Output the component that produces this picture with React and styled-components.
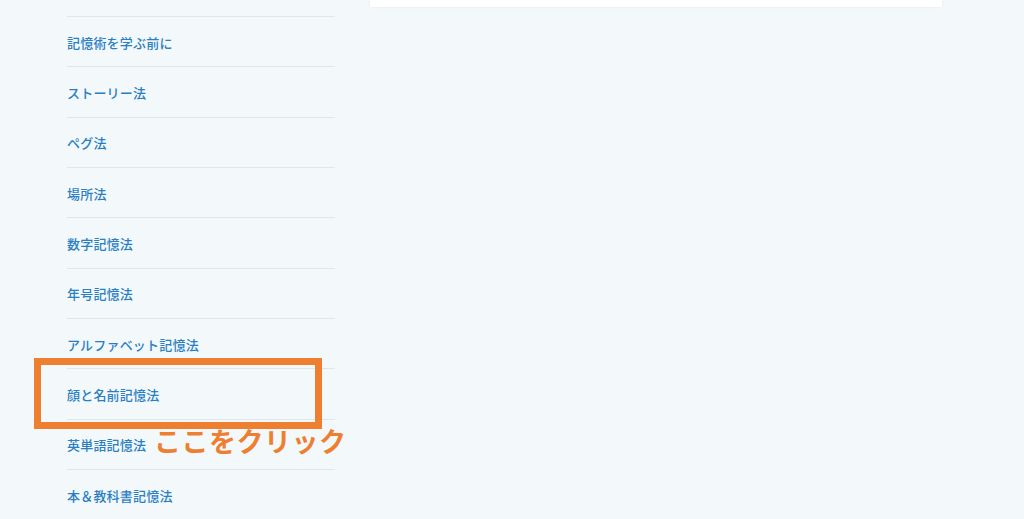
import React from "react";
import styled, { createGlobalStyle } from "styled-components";

const GlobalStyle = createGlobalStyle`
  html, body {
    margin: 0;
    padding: 0;
    background: #f3f8fb;
  }
  body {
    font-family: "Noto Sans CJK JP", "Noto Sans", sans-serif;
    overflow: hidden;
  }
`;

const Page = styled.div`
  position: relative;
  width: 1024px;
  height: 519px;
  display: flex;
  gap: 35px;
  padding-left: 67px;
  box-sizing: border-box;
  overflow: hidden;
`;

const Sidebar = styled.nav`
  width: 268px;
  padding-top: 16px;
`;

const MenuList = styled.ul`
  list-style: none;
  margin: 0;
  padding: 0;
`;

const MenuItem = styled.li`
  height: 50.33px;
  box-sizing: border-box;
  border-top: 1.5px solid #dfe6ec;
  display: flex;
  align-items: center;
  padding-top: 1px;
`;

const MenuLink = styled.a`
  color: #2a7fc1;
  font-size: 13px;
  font-weight: 500;
  text-decoration: none;
  letter-spacing: 0.2px;
`;

const Main = styled.main`
  width: 572px;
`;

const CardBottom = styled.div`
  height: 7px;
  background: #ffffff;
  box-shadow: 0 0 3px rgba(0, 0, 0, 0.06);
`;

const Highlight = styled.div`
  position: absolute;
  left: 34px;
  top: 358px;
  width: 288px;
  height: 71px;
  box-sizing: border-box;
  border: 7px solid #ee7f31;
`;

const Callout = styled.span`
  position: absolute;
  left: 154px;
  top: 422px;
  color: #ee7f31;
  font-size: 27px;
  font-weight: 700;
  letter-spacing: 0.5px;
  line-height: 38px;
`;

const items = [
  "記憶術を学ぶ前に",
  "ストーリー法",
  "ペグ法",
  "場所法",
  "数字記憶法",
  "年号記憶法",
  "アルファベット記憶法",
  "顔と名前記憶法",
  "英単語記憶法",
  "本＆教科書記憶法",
];

const App = () => {
  return (
    <>
      <GlobalStyle />
      <Page>
        <Sidebar>
          <MenuList>
            {items.map((label) => (
              <MenuItem key={label}>
                <MenuLink href="#">{label}</MenuLink>
              </MenuItem>
            ))}
          </MenuList>
        </Sidebar>
        <Main>
          <CardBottom />
        </Main>
        <Highlight />
        <Callout>ここをクリック</Callout>
      </Page>
    </>
  );
};

export default App;
